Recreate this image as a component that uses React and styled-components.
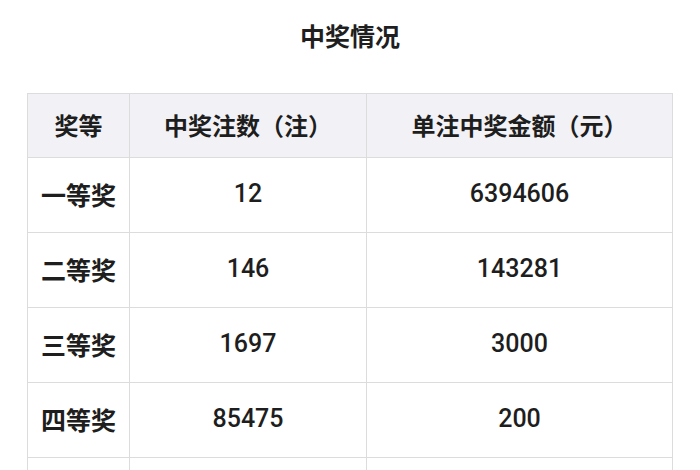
import React from "react";
import styled, { createGlobalStyle } from "styled-components";

const Global = createGlobalStyle`
  html, body { margin: 0; padding: 0; background: #ffffff; }
  body { font-family: Roboto, "Noto Sans CJK SC", sans-serif; color: #1e1e1e; }
`;

const Page = styled.div`
  width: 700px;
  height: 470px;
  overflow: hidden;
  display: flex;
  flex-direction: column;
  align-items: center;
`;

const Title = styled.h2`
  margin: 20px 0 0;
  height: 30px;
  line-height: 30px;
  font-size: 25px;
  font-weight: 700;
  font-family: "Noto Sans CJK SC", sans-serif;
  color: #1f1f1f;
`;

const Table = styled.table`
  margin-top: 43px;
  width: 645px;
  border-collapse: collapse;
  table-layout: fixed;
  border: 1px solid #dcdcdc;
`;

const HeadCell = styled.th`
  height: 61px;
  padding: 0 0 2px;
  background: #f2f2f6;
  border: 1px solid #dcdcdc;
  font-family: "Noto Sans CJK SC", sans-serif;
  font-size: 24px;
  font-weight: 700;
  color: #1e1e1e;
  text-align: center;
`;

const Cell = styled.td`
  height: 71px;
  padding: 0 0 3px;
  border: 1px solid #dcdcdc;
  text-align: center;
  font-size: 25px;
  font-weight: ${(p) => (p.$label ? 700 : 500)};
  font-family: ${(p) =>
    p.$label ? '"Noto Sans CJK SC", sans-serif' : 'Roboto, "Noto Sans CJK SC", sans-serif'};
  color: #1e1e1e;
`;

const rows = [
  ["一等奖", "12", "6394606"],
  ["二等奖", "146", "143281"],
  ["三等奖", "1697", "3000"],
  ["四等奖", "85475", "200"],
  ["", "", ""],
];

export default function App() {
  return (
    <Page>
      <Global />
      <Title>中奖情况</Title>
      <Table>
        <colgroup>
          <col style={{ width: "102px" }} />
          <col style={{ width: "237px" }} />
          <col style={{ width: "306px" }} />
        </colgroup>
        <thead>
          <tr>
            <HeadCell>奖等</HeadCell>
            <HeadCell>中奖注数（注）</HeadCell>
            <HeadCell>单注中奖金额（元）</HeadCell>
          </tr>
        </thead>
        <tbody>
          {rows.map((r, i) => (
            <tr key={i}>
              <Cell $label>{r[0]}</Cell>
              <Cell>{r[1]}</Cell>
              <Cell>{r[2]}</Cell>
            </tr>
          ))}
        </tbody>
      </Table>
    </Page>
  );
}
